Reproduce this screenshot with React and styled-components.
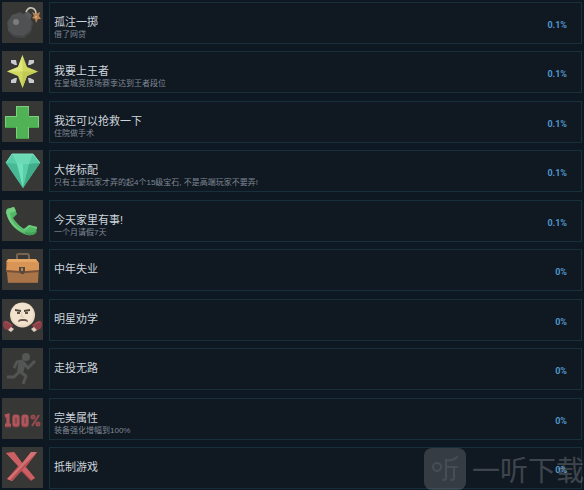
import React from "react";
import styled, { createGlobalStyle } from "styled-components";

const GlobalStyle = createGlobalStyle`
  * { box-sizing: border-box; }
  body {
    margin: 0;
    background: #0d1822;
    font-family: "Liberation Sans", "Noto Sans CJK SC", sans-serif;
  }
`;

const Page = styled.main`
  position: relative;
  min-height: 100vh;
  overflow: hidden;
`;

const List = styled.ul`
  display: flex;
  flex-direction: column;
  justify-content: space-between;
  min-height: 100vh;
  margin: 0;
  padding: 2px 2px 1px;
  list-style: none;
`;

const Row = styled.li`
  display: flex;
  gap: 6px;
`;

const Badge = styled.svg`
  display: block;
  flex: none;
  width: 41px;
  height: 41px;
  background: #373736;
`;

const Panel = styled.article`
  display: flex;
  flex: 1;
  justify-content: space-between;
  align-items: center;
  min-height: 42px;
  padding: 0 14px 0 4px;
  border: 1px solid #182f3c;
  background: #101821;
`;

const Info = styled.div`
  align-self: flex-start;
  padding-top: 12px;
`;

const Title = styled.h2`
  margin: 0;
  font-size: 11px;
  line-height: 14px;
  font-weight: 400;
  color: #cdd5dc;
`;

const Description = styled.p`
  margin: 0;
  font-size: 8px;
  line-height: 12px;
  color: #7f8995;
`;

const Rate = styled.span`
  padding-top: 4px;
  font-family: Roboto, "Liberation Sans", sans-serif;
  font-size: 9px;
  line-height: 12px;
  font-weight: 700;
  color: #5196cb;
`;

const Watermark = styled.div`
  position: absolute;
  right: 0;
  bottom: 0;
  display: flex;
  align-items: center;
  gap: 6px;
  opacity: 0.25;
  pointer-events: none;
`;

const WatermarkLogo = styled.svg`
  display: block;
  width: 42px;
  height: 42px;
`;

const WatermarkText = styled.span`
  font-family: "Noto Sans CJK SC", sans-serif;
  font-size: 28px;
  line-height: 42px;
  font-weight: 400;
  color: #c4c8cc;
`;

const Bomb = () => (
  <>
    <path d="M10 13 L18 10 L27 14 L31 21 L29 30 L22 36 L12 35 L6 29 L5 20Z" fill="#4a4b4d" />
    <path d="M10 13 L18 11 L27 14 L30 22 L28 29 L21 34 L12 33 L7 28 L6 20Z" fill="#505153" />
    <path d="M6 29 L12 33 L21 34 L28 29 L30 21 L31 21 L29 30 L22 36 L12 35Z" fill="#434446" />
    <circle cx="14" cy="20" r="3" fill="#7b7c7e" />
    <path d="M22 12 L25 9 L30 13 L28 18Z" fill="#57585a" />
    <path d="M24 10 Q26 5 30 6 Q34 7 34 12" fill="none" stroke="#c9c3b7" strokeWidth="1.6" />
    <path d="M30 10 L34 12 L38 10 L37 14 L39 17 L36 17 L34 21 L33 17 L30 16 L32 14Z" fill="#bd8353" />
    <circle cx="34" cy="15" r="1" fill="#e3b075" />
  </>
);

const Star = () => (
  <>
    <path d="M9 9 H14 L15 14 L13 14 L9 12Z M32 9 H27 L26 14 L28 14 L32 12Z M9 32 H14 L15 27 L13 27 L9 29Z M32 32 H27 L26 27 L28 27 L32 29Z" fill="#c9cbce" />
    <path d="M20.500 4 L25 16 L36 20.500 L25 25 L20.500 37 L16 25 L5 20.500 L16 16Z" fill="#d0d85f" />
    <path d="M20.500 4 L20.500 20.500 L5 20.500 L16 16Z" fill="#e0e77c" />
    <path d="M20.500 20.500 L36 20.500 L25 25 L20.500 37Z" fill="#c2ca57" />
  </>
);

const Cross = () => (
  <>
    <path d="M14 5 H27 V15 H37 V27 H27 V38 H14 V27 H3 V15 H14Z" fill="#7dce80" />
    <path d="M15 6 H26 L27 16 H36 V26 H26 V37 H15 V26 H4 V16 H15Z" fill="#50b255" />
    <path d="M14 37 H27 V38 H14Z M3 26 H14 V27 H3Z M27 26 H37 V27 H27Z" fill="#43a34a" />
  </>
);

const Gem = () => (
  <>
    <path d="M10 4 H31 L38 13 L21 38 L4 13Z" fill="#4ac39b" />
    <path d="M10 4 L15 14 L4 13Z M31 4 L27 14 L38 13Z" fill="#57cba6" />
    <path d="M10 4 H31 L27 14 H15Z" fill="#6bdab5" />
    <path d="M4 13 L15 14 L21 38Z" fill="#49b894" />
    <path d="M15 14 H27 L21 38Z" fill="#6fe0bb" />
    <path d="M21 14 H27 L21 38Z" fill="#58cea9" />
    <path d="M27 14 L38 13 L21 38Z" fill="#40ac88" />
    <path d="M4 13 L10 4 H31 L38 13" fill="none" stroke="#7edfbe" strokeWidth="1" />
  </>
);

const Phone = () => (
  <>
    <path d="M5 9 L12 7 L15 14 L11 18 Q15 25 22 29 L27 25 L35 27 L34 33 Q29 37 22 34 Q7 27 4 12Z" fill="#51b868" />
    <path d="M5 9 L12 7 L14 11 L8 13 Q9 26 25 33 Q8 29 4 12Z" fill="#74cd80" />
    <path d="M27 25 L35 27 L35 29 L28 27 L23 31 Q16 27 11 18 Q17 27 22 29Z" fill="#70c97b" />
    <path d="M23 34 Q30 37 34 33 L35 31 Q29 34 23 32Z" fill="#429f56" />
  </>
);

const Briefcase = () => (
  <>
    <path d="M15 11 V6 Q15 5 17 5 H25 Q27 5 27 7 V11" fill="none" stroke="#78644f" strokeWidth="2" />
    <path d="M6 11 H34 L37 14 L36 34 H6 L4 14Z" fill="#a87448" />
    <path d="M6 11 H34 L37 14 V22 L24 23 H18 L4 22Z" fill="#d99555" />
    <path d="M6 10 H34 L36 13 H4Z" fill="#e6a765" />
    <path d="M4 21 L18 22 H24 L37 21 V23 L24 24 H18 L4 23Z" fill="#765138" />
    <path d="M17 18 H23 V22 L22 25 H19 L17 22Z" fill="#57483d" />
    <rect x="19" y="19" width="2" height="3" fill="#b98755" />
    <path d="M6 33 H36 V34 H6Z" fill="#966541" />
  </>
);

const Boxer = () => (
  <>
    <circle cx="20.500" cy="16" r="12.500" fill="#e9d8bf" />
    <circle cx="20" cy="15" r="11" fill="#f1e3cd" />
    <path d="M13 10 L19 11 V13 L13 12Z M28 10 L22 11 V13 L28 12Z" fill="#51483d" />
    <path d="M15 13 H18 V15 H15Z M23 13 H26 V15 H23Z" fill="#5f5145" />
    <path d="M20 13 L19 18 H22" fill="none" stroke="#d9c9b0" />
    <path d="M16 23 Q16 20 20 20 H22 Q26 20 26 23 L23 22 H19Z" fill="#67534a" />
    <path d="M1 25 Q1 21 5 22 L11 26 L9 30 L5 31 Q1 30 1 25Z M40 25 Q40 21 36 22 L30 26 L32 30 L36 31 Q40 30 40 25Z" fill="#8d4047" />
    <path d="M3 23 L7 24 L9 26 M38 23 L34 24 L32 26" fill="none" stroke="#a9535a" />
    <path d="M9 28 L12 30 L9 33 L6 31Z M32 28 L29 30 L32 33 L35 31Z" fill="#dfcbbd" />
  </>
);

const Runner = () => (
  <g>
    <circle cx="24" cy="9" r="4" fill="#555656" />
    <path d="M12 20 L15 14 L20 13 L26 20 L33 13 M21 15 L17 24 L12 29 L5 29 M17 23 L24 28 L21 36" fill="none" stroke="#535454" strokeWidth="3" strokeLinejoin="round" />
    <path d="M17 12 L24 15 L21 25 L15 23Z" fill="#545555" />
  </g>
);

const Hundred = () => (
  <>
    <g fill="none" stroke="#7d3b40" strokeWidth="3" transform="translate(0 1)">
      <path d="M3 18 L6 17 V27 M3 27 H9" />
      <rect x="12" y="18" width="4" height="9" rx="1" />
      <rect x="21" y="18" width="4" height="9" rx="1" />
    </g>
    <g fill="none" stroke="#ad565b" strokeWidth="3">
      <path d="M3 18 L6 17 V27 M3 27 H9" />
      <rect x="12" y="18" width="4" height="9" rx="1" />
      <rect x="21" y="18" width="4" height="9" rx="1" />
    </g>
    <path d="M37 17 L30 28" stroke="#984b50" strokeWidth="2" />
    <circle cx="31" cy="19" r="1.500" fill="none" stroke="#984b50" strokeWidth="2" />
    <circle cx="36" cy="26" r="1.500" fill="none" stroke="#984b50" strokeWidth="2" />
  </>
);

const RedX = () => (
  <>
    <path d="M4 6 L12 5 L20 16 L29 5 L35 5 L24 20 L33 31 L29 34 L19 24 L10 34 L5 32 L16 19Z" fill="#ad464b" />
    <path d="M4 6 L12 5 L21 17 L33 31 L29 33 L17 20Z" fill="#ca6064" />
    <path d="M29 5 L35 5 L23 20 L10 34 L5 32 L19 18Z" fill="#d37072" />
    <path d="M35 6 L23 20 L10 34 L8 33 L22 18Z" fill="#b64f54" />
  </>
);

const achievements = [
  { icon: Bomb, title: "孤注一掷", description: "借了网贷", rate: "0.1%" },
  { icon: Star, title: "我要上王者", description: "在皇城竞技场赛季达到王者段位", rate: "0.1%" },
  { icon: Cross, title: "我还可以抢救一下", description: "住院做手术", rate: "0.1%" },
  { icon: Gem, title: "大佬标配", description: "只有土豪玩家才弄的起4个15级宝石, 不是高端玩家不要弄!", rate: "0.1%" },
  { icon: Phone, title: "今天家里有事!", description: "一个月请假7天", rate: "0.1%" },
  { icon: Briefcase, title: "中年失业", rate: "0%" },
  { icon: Boxer, title: "明星劝学", rate: "0%" },
  { icon: Runner, title: "走投无路", rate: "0%" },
  { icon: Hundred, title: "完美属性", description: "装备强化增幅到100%", rate: "0%" },
  { icon: RedX, title: "抵制游戏", rate: "0%" },
];

export default function App() {
  return (
    <Page lang="zh-CN">
      <GlobalStyle />
      <List>
        {achievements.map(({ icon: Icon, title, description, rate }) => (
          <Row key={title}>
            <Badge viewBox="0 0 41 41" aria-hidden="true">
              <Icon />
            </Badge>
            <Panel>
              <Info>
                <Title>{title}</Title>
                {description && <Description>{description}</Description>}
              </Info>
              <Rate>{rate}</Rate>
            </Panel>
          </Row>
        ))}
      </List>
      <Watermark>
        <WatermarkLogo viewBox="0 0 42 42" aria-hidden="true">
          <rect width="42" height="42" rx="8" fill="#a3a8ad" />
          <g fill="none" stroke="#e8ebee" strokeWidth="2" strokeLinecap="round">
            <circle cx="13" cy="19" r="4" />
            <path d="M33 9 Q29 13 22 12 V30 Q22 32 19 32 M22 19 H33 M30 19 V30 Q30 32 27 32" />
          </g>
        </WatermarkLogo>
        <WatermarkText>一听下载</WatermarkText>
      </Watermark>
    </Page>
  );
}
